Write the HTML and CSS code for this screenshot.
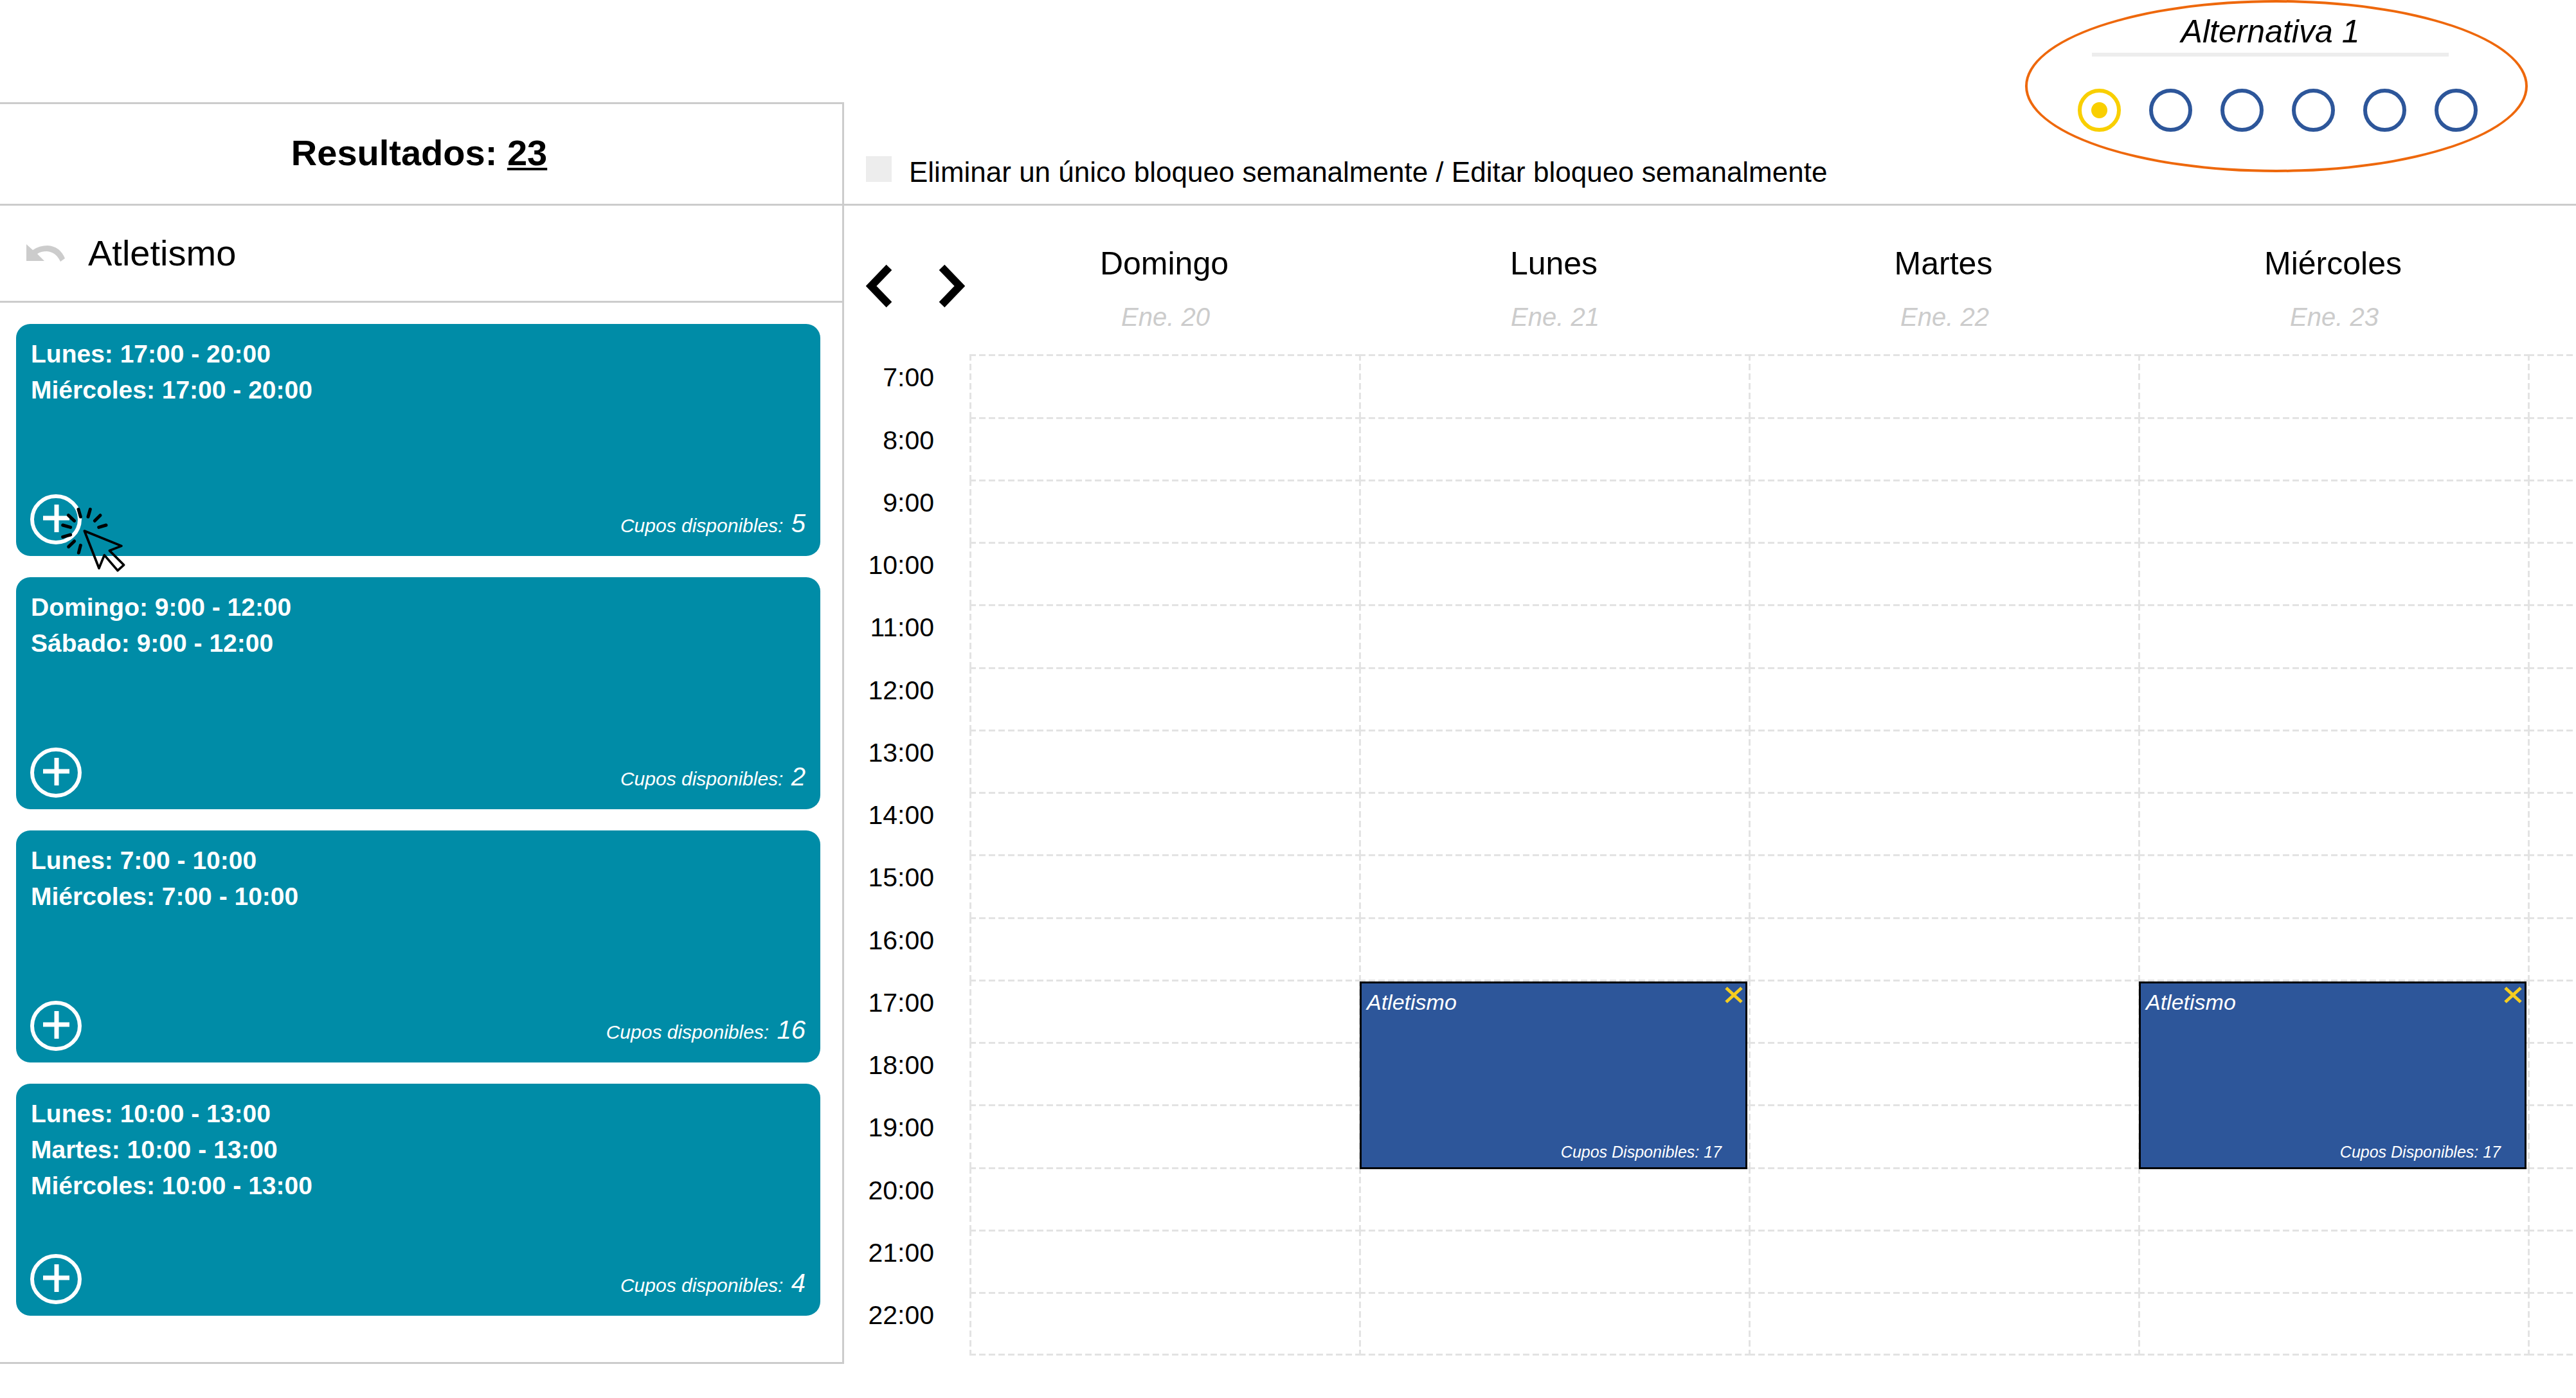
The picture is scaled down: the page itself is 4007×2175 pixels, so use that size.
FILE: index.html
```html
<!DOCTYPE html>
<html lang="es">
<head>
<meta charset="utf-8">
<title>Horario</title>
<link rel="stylesheet" href="styles.css">
</head>
<body>
<svg class="sprite" aria-hidden="true">
  <symbol id="plus" viewBox="0 0 80 78"><ellipse cx="40" cy="39" rx="37" ry="36" fill="none" stroke="#fff" stroke-width="6"/><path d="M20 37H61M41 16V59" fill="none" stroke="#fff" stroke-width="7"/></symbol>
  <symbol id="cross" viewBox="0 0 28 26"><path d="M2 2L26 24M26 2L2 24" fill="none" stroke="#f6cd1f" stroke-width="5"/></symbol>
</svg>
<div class="page">
  <aside class="results">
    <h1 class="results-title">Resultados: <u>23</u></h1>
    <div class="subject">
      <button class="icon-button" type="button" aria-label="Volver">
        <svg width="62" height="28" viewBox="0 0 62 28"><path d="M0 0L10 9Q20 2 33 2Q52 3 60 22L53 27Q46 12 32 11Q22 11 17 15L28 26H0Z" fill="#ccc"/></svg>
      </button>
      <h2 class="subject-name">Atletismo</h2>
    </div>
    <ul class="cards">
      <li class="card">
        <p class="slots">Lunes: 17:00 - 20:00<br>Miércoles: 17:00 - 20:00</p>
        <div class="card-foot">
          <button class="icon-button" type="button" aria-label="Agregar"><svg width="80" height="78"><use href="#plus"/></svg></button>
          <p class="seats">Cupos disponibles: <span class="seats-count">5</span></p>
        </div>
        <svg class="pointer" viewBox="279 140 309 312" aria-hidden="true"><g fill="none" stroke="#000" stroke-linecap="round" stroke-linejoin="round"><path stroke-width="15" d="M366 156L376 191M421 156L411 191M468 184L442 210M495 230L461 240M319 184L347 210M293 230L329 240M293 285L329 275M320 331L347 305M367 359L376 324"/><path stroke-width="11" d="M394 257L567 327L511 349L578 416L549 442L487 370L462 431Z"/></g></svg>
      </li>
      <li class="card">
        <p class="slots">Domingo: 9:00 - 12:00<br>Sábado: 9:00 - 12:00</p>
        <div class="card-foot">
          <button class="icon-button" type="button" aria-label="Agregar"><svg width="80" height="78"><use href="#plus"/></svg></button>
          <p class="seats">Cupos disponibles: <span class="seats-count">2</span></p>
        </div>
      </li>
      <li class="card">
        <p class="slots">Lunes: 7:00 - 10:00<br>Miércoles: 7:00 - 10:00</p>
        <div class="card-foot">
          <button class="icon-button" type="button" aria-label="Agregar"><svg width="80" height="78"><use href="#plus"/></svg></button>
          <p class="seats">Cupos disponibles: <span class="seats-count">16</span></p>
        </div>
      </li>
      <li class="card">
        <p class="slots">Lunes: 10:00 - 13:00<br>Martes: 10:00 - 13:00<br>Miércoles: 10:00 - 13:00</p>
        <div class="card-foot">
          <button class="icon-button" type="button" aria-label="Agregar"><svg width="80" height="78"><use href="#plus"/></svg></button>
          <p class="seats">Cupos disponibles: <span class="seats-count">4</span></p>
        </div>
      </li>
    </ul>
  </aside>

  <main class="schedule">
    <header class="toolbar">
      <div class="weekly">
        <input class="weekly-box" type="checkbox" id="weekly">
        <label for="weekly">Eliminar un único bloqueo semanalmente / Editar bloqueo semanalmente</label>
      </div>
      <div class="options" role="radiogroup" aria-labelledby="options-title">
        <p class="options-title" id="options-title">Alternativa 1</p>
        <div class="options-list">
          <input class="option" type="radio" name="option" aria-label="Alternativa 1" checked>
          <input class="option" type="radio" name="option" aria-label="Alternativa 2">
          <input class="option" type="radio" name="option" aria-label="Alternativa 3">
          <input class="option" type="radio" name="option" aria-label="Alternativa 4">
          <input class="option" type="radio" name="option" aria-label="Alternativa 5">
          <input class="option" type="radio" name="option" aria-label="Alternativa 6">
        </div>
      </div>
    </header>
    <div class="calendar-scroll">
    <table class="calendar">
      <colgroup><col class="col-time"><col class="col-day"><col class="col-day"><col class="col-day"><col class="col-day"><col class="col-day"></colgroup>
      <thead>
        <tr>
          <td class="pager-cell">
            <div class="pager">
              <button class="icon-button" type="button" aria-label="Semana anterior"><svg width="41" height="70" viewBox="0 0 41 70"><path d="M36 6L8 35L36 64" fill="none" stroke="#000" stroke-width="12"/></svg></button>
              <button class="icon-button" type="button" aria-label="Semana siguiente"><svg width="41" height="70" viewBox="0 0 41 70"><path d="M5 6L33 35L5 64" fill="none" stroke="#000" stroke-width="12"/></svg></button>
            </div>
          </td>
          <th scope="col">Domingo<span class="date">Ene. 20</span></th>
          <th scope="col">Lunes<span class="date">Ene. 21</span></th>
          <th scope="col">Martes<span class="date">Ene. 22</span></th>
          <th scope="col">Miércoles<span class="date">Ene. 23</span></th>
          <td></td>
        </tr>
      </thead>
      <tbody>
        <tr><th scope="row">7:00</th><td></td><td></td><td></td><td></td><td></td></tr>
        <tr><th scope="row">8:00</th><td></td><td></td><td></td><td></td><td></td></tr>
        <tr><th scope="row">9:00</th><td></td><td></td><td></td><td></td><td></td></tr>
        <tr><th scope="row">10:00</th><td></td><td></td><td></td><td></td><td></td></tr>
        <tr><th scope="row">11:00</th><td></td><td></td><td></td><td></td><td></td></tr>
        <tr><th scope="row">12:00</th><td></td><td></td><td></td><td></td><td></td></tr>
        <tr><th scope="row">13:00</th><td></td><td></td><td></td><td></td><td></td></tr>
        <tr><th scope="row">14:00</th><td></td><td></td><td></td><td></td><td></td></tr>
        <tr><th scope="row">15:00</th><td></td><td></td><td></td><td></td><td></td></tr>
        <tr><th scope="row">16:00</th><td></td><td></td><td></td><td></td><td></td></tr>
        <tr>
          <th scope="row">17:00</th><td></td>
          <td><div class="event"><div class="event-head"><span>Atletismo</span><button class="icon-button" type="button" aria-label="Quitar"><svg width="28" height="26"><use href="#cross"/></svg></button></div><p class="event-seats">Cupos Disponibles: 17</p></div></td>
          <td></td>
          <td><div class="event"><div class="event-head"><span>Atletismo</span><button class="icon-button" type="button" aria-label="Quitar"><svg width="28" height="26"><use href="#cross"/></svg></button></div><p class="event-seats">Cupos Disponibles: 17</p></div></td>
          <td></td>
        </tr>
        <tr><th scope="row">18:00</th><td></td><td></td><td></td><td></td><td></td></tr>
        <tr><th scope="row">19:00</th><td></td><td></td><td></td><td></td><td></td></tr>
        <tr><th scope="row">20:00</th><td></td><td></td><td></td><td></td><td></td></tr>
        <tr><th scope="row">21:00</th><td></td><td></td><td></td><td></td><td></td></tr>
        <tr><th scope="row">22:00</th><td></td><td></td><td></td><td></td><td></td></tr>
      </tbody>
    </table>
    </div>
  </main>
</div>
</body>
</html>
```
FILE: styles.css
```css
* { box-sizing: border-box; }

body {
  margin: 0;
  background: #fff;
  color: #000;
  font-family: "Liberation Sans", Arial, sans-serif;
}

h1, h2, p, ul { margin: 0; padding: 0; }
svg { display: block; }
.sprite { position: absolute; width: 0; height: 0; }

.icon-button {
  padding: 0;
  border: 0;
  background: none;
  cursor: pointer;
}

.page {
  display: grid;
  grid-template-columns: 1313px minmax(0, 1fr);
  align-items: start;
}

/* Results column */
.results {
  margin-top: 159px;
  border: 3px solid #ccc;
  border-left: 0;
}

.results-title {
  padding: 44px 6px 47px 0;
  border-bottom: 3px solid #ccc;
  font-size: 56px;
  line-height: 64px;
  text-align: center;
}

.results-title u { text-decoration-thickness: 4px; text-underline-offset: 4px; }

.subject {
  display: flex;
  align-items: center;
  gap: 34px;
  padding: 42px 41px;
  border-bottom: 3px solid #ccc;
}

.subject-name {
  font-size: 56px;
  font-weight: 400;
  line-height: 64px;
}

.cards {
  display: grid;
  gap: 33px;
  padding: 33px 34px 72px 25px;
  list-style: none;
}

.card {
  position: relative;
  display: flex;
  flex-direction: column;
  justify-content: space-between;
  min-height: 361px;
  padding: 19px 23px 18px 22px;
  border-radius: 22px;
  background: #008ca7;
  color: #fff;
}

.slots {
  padding-left: 1px;
  font-size: 39px;
  font-weight: 700;
  line-height: 56px;
}

.card-foot {
  display: flex;
  align-items: center;
  justify-content: space-between;
}

.seats {
  padding-top: 16px;
  font-size: 30px;
  font-style: italic;
  line-height: 40px;
}

.seats-count { margin-left: 4px; font-size: 40px; }

.pointer {
  position: absolute;
  top: 283px;
  left: 68px;
  z-index: 1;
  width: 103px;
  height: 104px;
}

/* Toolbar */
.toolbar {
  display: flex;
  align-items: flex-start;
  justify-content: space-between;
  min-height: 320px;
  padding-right: 75px;
  border-bottom: 3px solid #ccc;
}

.weekly {
  display: flex;
  align-items: center;
  gap: 27px;
  padding: 238px 0 0 34px;
  font-size: 44px;
  line-height: 60px;
}

.weekly-box {
  appearance: none;
  width: 40px;
  height: 40px;
  margin: 0 0 10px;
  background: #ededed;
}

.options {
  width: 782px;
  height: 268px;
  padding: 15px 0 0 78px;
  border: 4px solid #ee680c;
  border-radius: 50%;
}

.options-title {
  width: 555px;
  margin-left: 22px;
  padding-bottom: 3px;
  border-bottom: 6px solid #ededed;
  font-size: 50px;
  font-style: italic;
  line-height: 60px;
  text-align: center;
}

.options-list {
  display: flex;
  gap: 44px;
  padding-top: 50px;
}

.option {
  appearance: none;
  width: 67px;
  height: 67px;
  margin: 0;
  border: 6px solid #2d569a;
  border-radius: 50%;
}

.option:checked {
  border-color: #f9cf00;
  background: radial-gradient(circle, #f9cf00 12px, transparent 13px);
}

/* Calendar */
.calendar-scroll { overflow: hidden; }

.calendar {
  width: 3225px;
  border-collapse: collapse;
  table-layout: fixed;
}

.col-time { width: 195px; }
.col-day { width: 606px; }

.calendar th, .calendar td {
  padding: 0;
  font-weight: 400;
  vertical-align: top;
}

.calendar thead tr { height: 231px; }

.calendar thead th {
  padding-top: 60px;
  font-size: 50px;
  line-height: 60px;
}

.date {
  display: block;
  padding: 23px 0 0 4px;
  color: #ccc;
  font-size: 40px;
  font-style: italic;
}

.pager {
  display: flex;
  gap: 72px;
  padding: 90px 0 0 34px;
}

.calendar tbody tr { height: 97px; }
.calendar tbody tr:nth-child(4n+1) { height: 98px; }

.calendar tbody th {
  padding-right: 55px;
  font-size: 41px;
  line-height: 72px;
  text-align: right;
}

.calendar tbody td {
  position: relative;
  background:
    repeating-linear-gradient(90deg, #e3e3e3 0 10px, transparent 10px 15px) top / 100% 3px no-repeat,
    repeating-linear-gradient(180deg, #e3e3e3 0 10px, transparent 10px 15px) left / 3px 100% no-repeat;
}

.calendar tbody tr:last-child { height: 99px; }

.calendar tbody tr:last-child td {
  background:
    repeating-linear-gradient(90deg, #e3e3e3 0 10px, transparent 10px 15px) top / 100% 3px no-repeat,
    repeating-linear-gradient(90deg, #e3e3e3 0 10px, transparent 10px 15px) bottom / 100% 3px no-repeat,
    repeating-linear-gradient(180deg, #e3e3e3 0 10px, transparent 10px 15px) left / 3px 100% no-repeat;
}

.event {
  position: absolute;
  top: 3px;
  left: 1px;
  right: 2px;
  z-index: 1;
  display: flex;
  flex-direction: column;
  justify-content: space-between;
  height: 292px;
  padding: 5px 4px 4px 8px;
  border: 3px solid #000;
  background: #2d569a;
  color: #fff;
  font-style: italic;
}

.event-head {
  display: flex;
  align-items: flex-start;
  justify-content: space-between;
  font-size: 34px;
  line-height: 48px;
}

.event-seats {
  padding-right: 33px;
  font-size: 25px;
  line-height: 40px;
  text-align: right;
}
```
